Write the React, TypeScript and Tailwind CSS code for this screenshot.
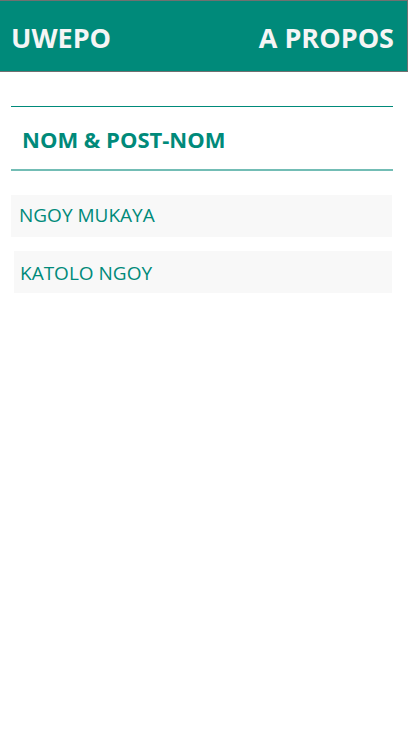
export default function App() {
  return (
    <div className="min-h-screen bg-white font-['Open_Sans','Noto_Sans',sans-serif] text-[#008a7a]">
      <header className="flex h-[72px] items-center justify-between border-y border-r border-[#707070] bg-[#008a7a] pt-1 pr-[13px] pl-[11px] text-[27px] leading-9 font-bold text-[#f5f5f5]">
        <h1>UWEPO</h1>
        <a href="#apropos">A PROPOS</a>
      </header>
      <main className="mt-[34px] mr-[15px] ml-[11px]">
        <h2 className="border-t border-b-2 border-t-[#008a7a] border-b-[#73bdb5] px-[11px] pt-4 pb-[14px] text-[22px] leading-8 font-bold">NOM &amp; POST-NOM</h2>
        <ul className="mt-6 mr-px flex flex-col gap-[14px] text-[19px] leading-10">
          <li className="bg-[#f8f8f8] px-2 pb-[2px]">NGOY MUKAYA</li>
          <li className="ml-[3px] bg-[#f8f8f8] px-[6px] pt-[2px]">KATOLO NGOY</li>
        </ul>
      </main>
    </div>
  );
}
